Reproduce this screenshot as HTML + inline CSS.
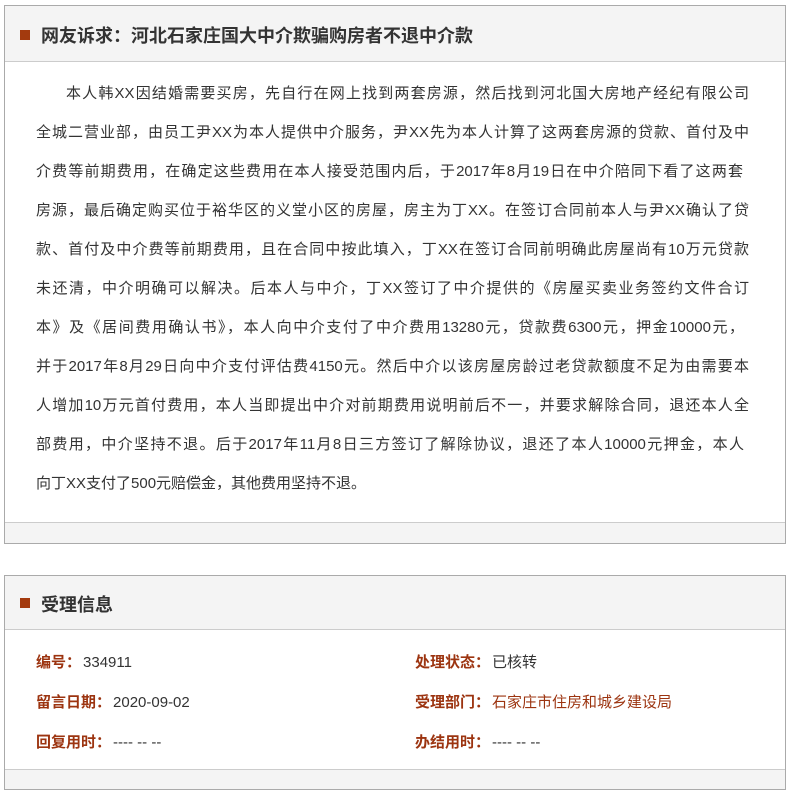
<!DOCTYPE html>
<html><head><meta charset="utf-8"><style>
*{margin:0;padding:0;box-sizing:border-box}
body{width:789px;height:776px;background:#fff;font-family:"Liberation Sans","Noto Sans CJK SC",sans-serif;color:#333;position:relative;overflow:hidden}
.box{position:absolute;left:4px;width:782px;border:1px solid #aaa;background:#fff}
.hd{background:#f4f4f4;border-bottom:1px solid #ccc;height:56px;position:relative}
.hd i{position:absolute;left:15px;top:24px;width:10px;height:10px;background:#a33a0e}
.hd b{position:absolute;left:36px;top:16px;font-size:18px;color:#333}
.ln{position:absolute;left:31px;width:713px;font-size:15px;white-space:nowrap;text-align:justify;text-align-last:justify;color:#333}
.ft{position:absolute;left:0;right:0;bottom:0;height:21px;background:#f4f4f4;border-top:1px solid #ccc}
.r{position:absolute;font-size:15px;white-space:nowrap}
.r b{color:#9c3410;margin-right:2px}
</style></head><body>
<div class="box" style="top:5px;height:539px">
 <div class="hd"><i></i><b>网友诉求：河北石家庄国大中介欺骗购房者不退中介款</b></div>
 <div class="ln" style="top:76px;left:61px;width:683px">本人韩XX因结婚需要买房，先自行在网上找到两套房源，然后找到河北国大房地产经纪有限公司</div>
 <div class="ln" style="top:115px">全城二营业部，由员工尹XX为本人提供中介服务，尹XX先为本人计算了这两套房源的贷款、首付及中</div>
 <div class="ln" style="top:154px;width:707px">介费等前期费用，在确定这些费用在本人接受范围内后，于2017年8月19日在中介陪同下看了这两套</div>
 <div class="ln" style="top:193px;width:713px">房源，最后确定购买位于裕华区的义堂小区的房屋，房主为丁XX。在签订合同前本人与尹XX确认了贷</div>
 <div class="ln" style="top:232px;width:713px">款、首付及中介费等前期费用，且在合同中按此填入，丁XX在签订合同前明确此房屋尚有10万元贷款</div>
 <div class="ln" style="top:271px;width:713px">未还清，中介明确可以解决。后本人与中介，丁XX签订了中介提供的《房屋买卖业务签约文件合订</div>
 <div class="ln" style="top:310px;width:708px">本》及《居间费用确认书》，本人向中介支付了中介费用13280元，贷款费6300元，押金10000元，</div>
 <div class="ln" style="top:349px;width:713px">并于2017年8月29日向中介支付评估费4150元。然后中介以该房屋房龄过老贷款额度不足为由需要本</div>
 <div class="ln" style="top:388px;width:713px">人增加10万元首付费用，本人当即提出中介对前期费用说明前后不一，并要求解除合同，退还本人全</div>
 <div class="ln" style="top:427px;width:708px">部费用，中介坚持不退。后于2017年11月8日三方签订了解除协议，退还了本人10000元押金，本人</div>
 <div class="ln" style="top:466px;width:auto;text-align-last:auto">向丁XX支付了500元赔偿金，其他费用坚持不退。</div>
 <div class="ft"></div>
</div>
<div class="box" style="top:575px;height:215px">
 <div class="hd" style="height:54px"><i style="top:22px"></i><b style="top:15px">受理信息</b></div>
 <div class="r" style="left:31px;top:75px"><b>编号：</b>334911</div>
 <div class="r" style="left:31px;top:115px"><b>留言日期：</b>2020-09-02</div>
 <div class="r" style="left:31px;top:155px"><b>回复用时：</b>---- -- --</div>
 <div class="r" style="left:410px;top:75px"><b>处理状态：</b>已核转</div>
 <div class="r" style="left:410px;top:115px"><b>受理部门：</b><span style="color:#9c3410">石家庄市住房和城乡建设局</span></div>
 <div class="r" style="left:410px;top:155px"><b>办结用时：</b>---- -- --</div>
 <div class="ft" style="height:20px"></div>
</div>
</body></html>
